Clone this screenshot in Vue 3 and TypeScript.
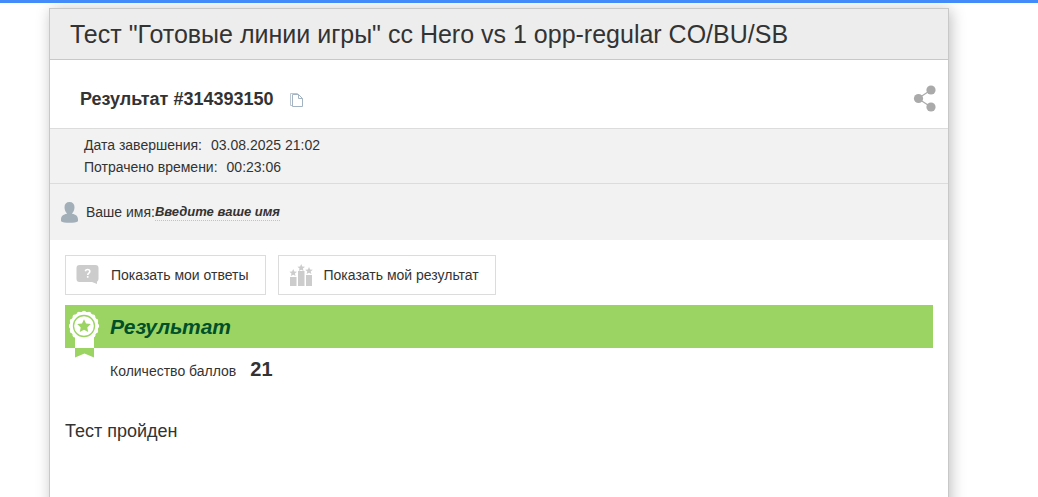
<script setup lang="ts">
interface Fact {
  label: string
  value: string
}

const title = 'Тест "Готовые линии игры" cc Hero vs 1 opp-regular CO/BU/SB'
const resultId = '314393150'
const facts: Fact[] = [
  { label: 'Дата завершения:', value: '03.08.2025 21:02' },
  { label: 'Потрачено времени:', value: '00:23:06' },
]
const score = 21

// Scalloped rim of the award rosette
const rim = Array.from({ length: 16 }, (_, i) => {
  const a = (i * Math.PI) / 8
  return { x: 15 + 13 * Math.cos(a), y: 16 + 13 * Math.sin(a) }
})
</script>

<template>
  <div class="page">
    <main class="card">
      <header class="card-header">
        <h1>{{ title }}</h1>
      </header>

      <section class="result-bar">
        <h2>Результат #{{ resultId }}</h2>
        <button class="copy" type="button" aria-label="Скопировать">
          <svg width="14" height="16" viewBox="0 0 14 16" fill="none" stroke="#a3b3c1">
            <path d="M2.500 13.500h-2v-12h7l1 1" stroke="#bac7d2" />
            <path d="M2.500 2.500h6l4 4v8h-10z" fill="#fff" />
            <path d="M8.500 2.500v4h4" />
          </svg>
        </button>
        <button class="share" type="button" aria-label="Поделиться">
          <svg width="24" height="28" viewBox="0 0 24 28" fill="#aaa">
            <path d="M18 5 5 13.500 18 22" fill="none" stroke="#aaa" stroke-width="1.200" />
            <circle cx="18" cy="5" r="4.600" />
            <circle cx="5.500" cy="13.500" r="4.600" />
            <circle cx="18" cy="22" r="4.600" />
          </svg>
        </button>
      </section>

      <dl class="facts">
        <div v-for="fact in facts" :key="fact.label" class="fact">
          <dt>{{ fact.label }}</dt>
          <dd>{{ fact.value }}</dd>
        </div>
      </dl>

      <section class="name-row">
        <svg class="person" width="17" height="21" viewBox="0 0 17 21" fill="#a2afb8">
          <path d="M8.500 0c3.200 0 5 2 5 5.200 0 2.600-1 4.800-2.400 6v.5c3.600.7 5.900 2.200 5.900 5.800v1.700c-1.500 1-4.600 1.600-8.500 1.600S1.500 20.200 0 19.200v-1.700c0-3.600 2.300-5.100 5.900-5.800v-.5c-1.400-1.200-2.400-3.400-2.400-6C3.500 2 5.300 0 8.500 0z" />
        </svg>
        <span>Ваше имя:</span>
        <button class="name-edit" type="button">Введите ваше имя</button>
      </section>

      <section class="content">
        <div class="actions">
          <button class="action" type="button">
            <svg width="24" height="22" viewBox="0 0 24 22">
              <path d="M3.500 1h16a3 3 0 0 1 3 3v11a3 3 0 0 1-1.500 2.700V20l-5-2H3.500a3 3 0 0 1-3-3V4a3 3 0 0 1 3-3z" fill="#ccc" />
              <path d="M9.300 7.200C9.600 6 10.500 5.500 11.600 5.500c1.300 0 2.200.8 2.200 1.900 0 1.700-2.100 1.600-2.100 3.600M11.700 12.100v1.700" fill="none" stroke="#fff" stroke-width="1.600" />
            </svg>
            <span>Показать мои ответы</span>
          </button>
          <button class="action" type="button">
            <svg width="24" height="22" viewBox="0 0 24 22" fill="#ccc">
              <path d="M1 13h6.500v9H1zM9 7h6.500v15H9zM17 11h6v11h-6z" />
              <path d="m4.200 5 1.100 2.500 2.700.2-2.100 1.800.7 2.600-2.400-1.400-2.400 1.400.7-2.600L.4 7.700l2.700-.2z" />
              <path d="m12.200 0 1.100 2.500 2.700.2-2.100 1.800.7 2.600-2.400-1.400-2.400 1.400.7-2.600-2.100-1.800 2.700-.2z" />
              <path d="m20 3 1.100 2.500 2.700.2-2.100 1.800.7 2.600L20 8.700l-2.400 1.400.7-2.600-2.100-1.800 2.700-.2z" />
            </svg>
            <span>Показать мой результат</span>
          </button>
        </div>

        <div class="result-heading">
          <svg class="award" width="32" height="48" viewBox="0 0 32 48">
            <path d="M6 23h19v15H6z" fill="#fff" />
            <path d="M6 38h19v9.500l-9.500-4-9.500 4z" fill="#9bd462" />
            <circle cx="15" cy="16" r="14.300" fill="#fff" />
            <circle v-for="(dot, i) in rim" :key="i" :cx="dot.x" :cy="dot.y" r="2.200" fill="#fff" />
            <circle cx="15" cy="16" r="10.500" fill="none" stroke="#9bd462" stroke-width="1.300" />
            <path d="m15 9.200 2 4.300 4.800.6-3.500 3.300.9 4.700-4.200-2.300-4.200 2.300.9-4.700-3.500-3.300 4.800-.6z" fill="#9bd462" />
          </svg>
          <h3>Результат</h3>
        </div>

        <p class="score">
          <span>Количество баллов</span>
          <strong>{{ score }}</strong>
        </p>
        <p class="message">Тест пройден</p>
      </section>
    </main>
  </div>
</template>

<style>
body {
  margin: 0;
  background: #fff;
}
</style>

<style scoped>
.page {
  box-sizing: border-box;
  display: flex;
  justify-content: center;
  min-height: 100vh;
  padding: 5px 40px 0 0;
  border-top: 3px solid #428bf9;
  overflow: hidden;
  color: #333;
  font: 14px/22px "Liberation Sans", Arial, sans-serif;
}

.card {
  box-sizing: border-box;
  flex: 0 1 900px;
  margin-bottom: -20px;
  border: 1px solid #c8c8c8;
  background: #fff;
  box-shadow: 2px 2px 14px rgba(0, 0, 0, 0.25);
}

h1,
h2,
h3,
p,
dl,
dd {
  margin: 0;
}

svg {
  display: block;
  flex: none;
}

button {
  padding: 0;
  border: 0;
  background: none;
  color: inherit;
  font: inherit;
  cursor: pointer;
}

.card-header {
  padding: 10px 20px;
  border-bottom: 1px solid #c8c8c8;
  background: #ededed;
}

h1 {
  font-size: 25px;
  line-height: 30px;
  font-weight: 400;
}

.result-bar {
  display: flex;
  align-items: center;
  padding: 25px 11px 15px 30px;
}

h2 {
  font-size: 18px;
  line-height: 28px;
}

.copy {
  margin: 2px 0 0 16px;
}

.share {
  margin-left: auto;
}

.facts {
  padding: 5px 34px;
  border: solid #dcdcdc;
  border-width: 1px 0;
  background: #f2f2f2;
}

.fact {
  display: flex;
  gap: 9px;
}

.name-row {
  display: flex;
  align-items: center;
  padding: 17px 11px;
  background: #f2f2f2;
}

.person {
  margin-right: 8px;
}

.name-edit {
  border-bottom: 1px dotted #b5c5d3;
  font-size: 13px;
  line-height: 16px;
  font-weight: 700;
  font-style: italic;
}

.content {
  padding: 15px;
}

.actions {
  display: flex;
  flex-wrap: wrap;
  gap: 12px;
}

.action {
  display: flex;
  align-items: center;
  gap: 11px;
  padding: 8px 16px 8px 10px;
  border: 1px solid #dcdcdc;
}

.result-heading {
  position: relative;
  margin-top: 10px;
  padding: 8px 45px 7px;
  background: #9bd462;
  color: #00502a;
}

.award {
  position: absolute;
  top: 5px;
  left: 4px;
}

h3 {
  font-size: 21px;
  line-height: 28px;
  font-style: italic;
}

.score {
  display: flex;
  align-items: baseline;
  gap: 14px;
  padding: 7px 45px;
}

.score strong {
  font-size: 20px;
  line-height: 28px;
}

.message {
  margin-top: 30px;
  font-size: 18px;
}
</style>
